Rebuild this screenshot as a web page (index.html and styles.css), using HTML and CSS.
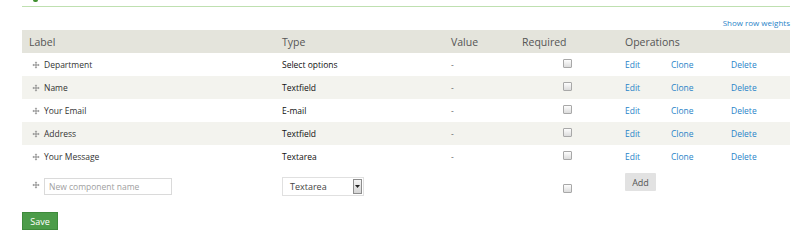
FILE: index.html
```html
<!DOCTYPE html>
<html>
<head>
<meta charset="utf-8">
<link rel="stylesheet" href="styles.css">
</head>
<body>
<div class="page">
  <div class="top-mark"></div>
  <div class="rule"></div>
  <div class="weights"><a href="#">Show row weights</a></div>
  <table class="components">
    <colgroup>
      <col class="w-label">
      <col class="w-type">
      <col class="w-value">
      <col class="w-req">
      <col class="w-edit">
      <col class="w-clone">
      <col class="w-del">
    </colgroup>
    <thead>
      <tr>
        <th>Label</th>
        <th>Type</th>
        <th>Value</th>
        <th>Required</th>
        <th colspan="3">Operations</th>
      </tr>
    </thead>
    <tbody>
      <tr>
        <td class="c-label"><span class="handle"><svg viewBox="0 0 9 9" width="8" height="8"><path d="M4.5 0.5 L3 2 H4 V4 H2 V3 L0.5 4.5 L2 6 V5 H4 V7 H3 L4.5 8.5 L6 7 H5 V5 H7 V6 L8.5 4.5 L7 3 V4 H5 V2 H6 Z" fill="#8a8a8a"/></svg></span>Department</td>
        <td class="c-type">Select options</td>
        <td class="c-value">-</td>
        <td class="c-req"><input type="checkbox" class="cb"></td>
        <td><a href="#">Edit</a></td>
        <td><a href="#">Clone</a></td>
        <td><a href="#">Delete</a></td>
      </tr>
      <tr class="even">
        <td class="c-label"><span class="handle"><svg viewBox="0 0 9 9" width="8" height="8"><path d="M4.5 0.5 L3 2 H4 V4 H2 V3 L0.5 4.5 L2 6 V5 H4 V7 H3 L4.5 8.5 L6 7 H5 V5 H7 V6 L8.5 4.5 L7 3 V4 H5 V2 H6 Z" fill="#8a8a8a"/></svg></span>Name</td>
        <td class="c-type">Textfield</td>
        <td class="c-value">-</td>
        <td class="c-req"><input type="checkbox" class="cb"></td>
        <td><a href="#">Edit</a></td>
        <td><a href="#">Clone</a></td>
        <td><a href="#">Delete</a></td>
      </tr>
      <tr>
        <td class="c-label"><span class="handle"><svg viewBox="0 0 9 9" width="8" height="8"><path d="M4.5 0.5 L3 2 H4 V4 H2 V3 L0.5 4.5 L2 6 V5 H4 V7 H3 L4.5 8.5 L6 7 H5 V5 H7 V6 L8.5 4.5 L7 3 V4 H5 V2 H6 Z" fill="#8a8a8a"/></svg></span>Your Email</td>
        <td class="c-type">E-mail</td>
        <td class="c-value">-</td>
        <td class="c-req"><input type="checkbox" class="cb"></td>
        <td><a href="#">Edit</a></td>
        <td><a href="#">Clone</a></td>
        <td><a href="#">Delete</a></td>
      </tr>
      <tr class="even">
        <td class="c-label"><span class="handle"><svg viewBox="0 0 9 9" width="8" height="8"><path d="M4.5 0.5 L3 2 H4 V4 H2 V3 L0.5 4.5 L2 6 V5 H4 V7 H3 L4.5 8.5 L6 7 H5 V5 H7 V6 L8.5 4.5 L7 3 V4 H5 V2 H6 Z" fill="#8a8a8a"/></svg></span>Address</td>
        <td class="c-type">Textfield</td>
        <td class="c-value">-</td>
        <td class="c-req"><input type="checkbox" class="cb"></td>
        <td><a href="#">Edit</a></td>
        <td><a href="#">Clone</a></td>
        <td><a href="#">Delete</a></td>
      </tr>
      <tr>
        <td class="c-label"><span class="handle"><svg viewBox="0 0 9 9" width="8" height="8"><path d="M4.5 0.5 L3 2 H4 V4 H2 V3 L0.5 4.5 L2 6 V5 H4 V7 H3 L4.5 8.5 L6 7 H5 V5 H7 V6 L8.5 4.5 L7 3 V4 H5 V2 H6 Z" fill="#8a8a8a"/></svg></span>Your Message</td>
        <td class="c-type">Textarea</td>
        <td class="c-value">-</td>
        <td class="c-req"><input type="checkbox" class="cb"></td>
        <td><a href="#">Edit</a></td>
        <td><a href="#">Clone</a></td>
        <td><a href="#">Delete</a></td>
      </tr>
      <tr class="add-row">
        <td class="c-label"><span class="handle add-handle"><svg viewBox="0 0 9 9" width="8" height="8"><path d="M4.5 0.5 L3 2 H4 V4 H2 V3 L0.5 4.5 L2 6 V5 H4 V7 H3 L4.5 8.5 L6 7 H5 V5 H7 V6 L8.5 4.5 L7 3 V4 H5 V2 H6 Z" fill="#8a8a8a"/></svg></span><input type="text" class="name-input" placeholder="New component name"></td>
        <td class="c-type"><div class="select"><span class="select-text">Textarea</span><span class="select-btn"><svg viewBox="0 0 5 3" width="5" height="3"><path d="M0 0 H5 L2.5 3 Z" fill="#222"/></svg></span></div></td>
        <td class="c-value"></td>
        <td class="c-req"><input type="checkbox" class="cb add-cb"></td>
        <td colspan="3"><button class="add-btn">Add</button></td>
      </tr>
    </tbody>
  </table>
  <button class="save-btn">Save</button>
</div>
</body>
</html>
```

FILE: styles.css
```css
html, body {
  margin: 0;
  padding: 0;
  background: #ffffff;
}
body {
  font-family: "Open Sans", "Liberation Sans", sans-serif;
  color: #333333;
}
.page {
  padding: 0 10px 0 22px;
}
.top-mark {
  width: 5px;
  height: 2px;
  margin-left: 11px;
  background: #3f8f2f;
  border-radius: 0 0 3px 3px;
}
.rule {
  margin-top: 4px;
  height: 0;
  border-bottom: 1px solid #bfe0b0;
}
.weights {
  height: 23px;
  box-sizing: border-box;
  display: flex;
  justify-content: flex-end;
  align-items: center;
  padding-top: 9px;
  font-size: 8px;
  line-height: 10px;
}
.weights a {
  color: #2a84c8;
  text-decoration: none;
}
.components {
  width: 768px;
  border-collapse: collapse;
  table-layout: fixed;
}
.w-label { width: 253px; }
.w-type { width: 169px; }
.w-value { width: 71px; }
.w-req { width: 103px; }
.w-edit { width: 46px; }
.w-clone { width: 60px; }
.w-del { width: 66px; }
.components th,
.components td {
  padding: 0 0 0 7px;
  text-align: left;
  white-space: nowrap;
  box-sizing: border-box;
}
.components thead tr {
  background: #e4e4dc;
}
.components th {
  font-weight: normal;
  font-size: 10.5px;
  color: #555555;
  height: 23px;
}
.components td {
  font-size: 8.5px;
  height: 23px;
  color: #333333;
}
.components td.c-type {
  color: #111111;
  font-size: 8.5px;
}
.components td.c-value {
  color: #666666;
}
.components td.c-req {
  text-align: center;
  padding-left: 0;
}
.components tbody tr.even {
  background: #f3f3ee;
}
.components td a {
  color: #2a84c8;
  text-decoration: none;
}
.handle {
  display: inline-block;
  box-sizing: border-box;
  width: 15px;
  padding-left: 3px;
  vertical-align: -1px;
}
.handle svg {
  display: block;
}
.cb {
  appearance: none;
  -webkit-appearance: none;
  width: 9px;
  height: 9px;
  margin: 0;
  border: 1px solid #a8a8a8;
  border-radius: 1px;
  background: linear-gradient(#fdfdfd, #dcdcdc);
  vertical-align: middle;
  position: relative;
  top: -2px;
  left: 1px;
}
.components .add-row td {
  height: 35px;
  vertical-align: top;
}
.add-row .handle.add-handle {
  vertical-align: top;
  margin-top: 13px;
}
.name-input {
  width: 128px;
  height: 17px;
  box-sizing: border-box;
  margin: 10px 0 0 0;
  border: 1px solid #dadada;
  padding: 0 4px;
  font-family: "Open Sans", "Liberation Sans", sans-serif;
  font-size: 8.5px;
  color: #333;
  vertical-align: top;
}
.name-input::placeholder {
  color: #a0a0a0;
}
.select {
  margin-top: 9px;
  width: 82px;
  height: 19px;
  box-sizing: border-box;
  border: 1px solid #e0e0e0;
  display: flex;
  align-items: center;
  justify-content: space-between;
  padding-left: 7px;
  padding-right: 1px;
  font-size: 9px;
  color: #444;
}
.select-btn {
  width: 9px;
  height: 15px;
  box-sizing: border-box;
  border: 1px solid #8d8d8d;
  background: linear-gradient(#f4f4f4, #d4d4d4);
  display: flex;
  align-items: center;
  justify-content: center;
}
.components .add-row td.c-req {
  padding-top: 14px;
}
.add-row .cb.add-cb {
  top: 0;
}
.add-btn {
  margin-top: 5px;
  width: 31px;
  height: 18px;
  border: none;
  background: #e2e2e2;
  color: #555;
  font-family: "Open Sans", "Liberation Sans", sans-serif;
  font-size: 9px;
  padding: 0;
  border-radius: 1px;
}
.save-btn {
  display: block;
  margin-top: 9px;
  width: 36px;
  height: 18px;
  border: 1px solid #3e8a3b;
  background: #4c9c49;
  color: #ffffff;
  font-family: "Open Sans", "Liberation Sans", sans-serif;
  font-size: 9px;
  padding: 0;
}
```
